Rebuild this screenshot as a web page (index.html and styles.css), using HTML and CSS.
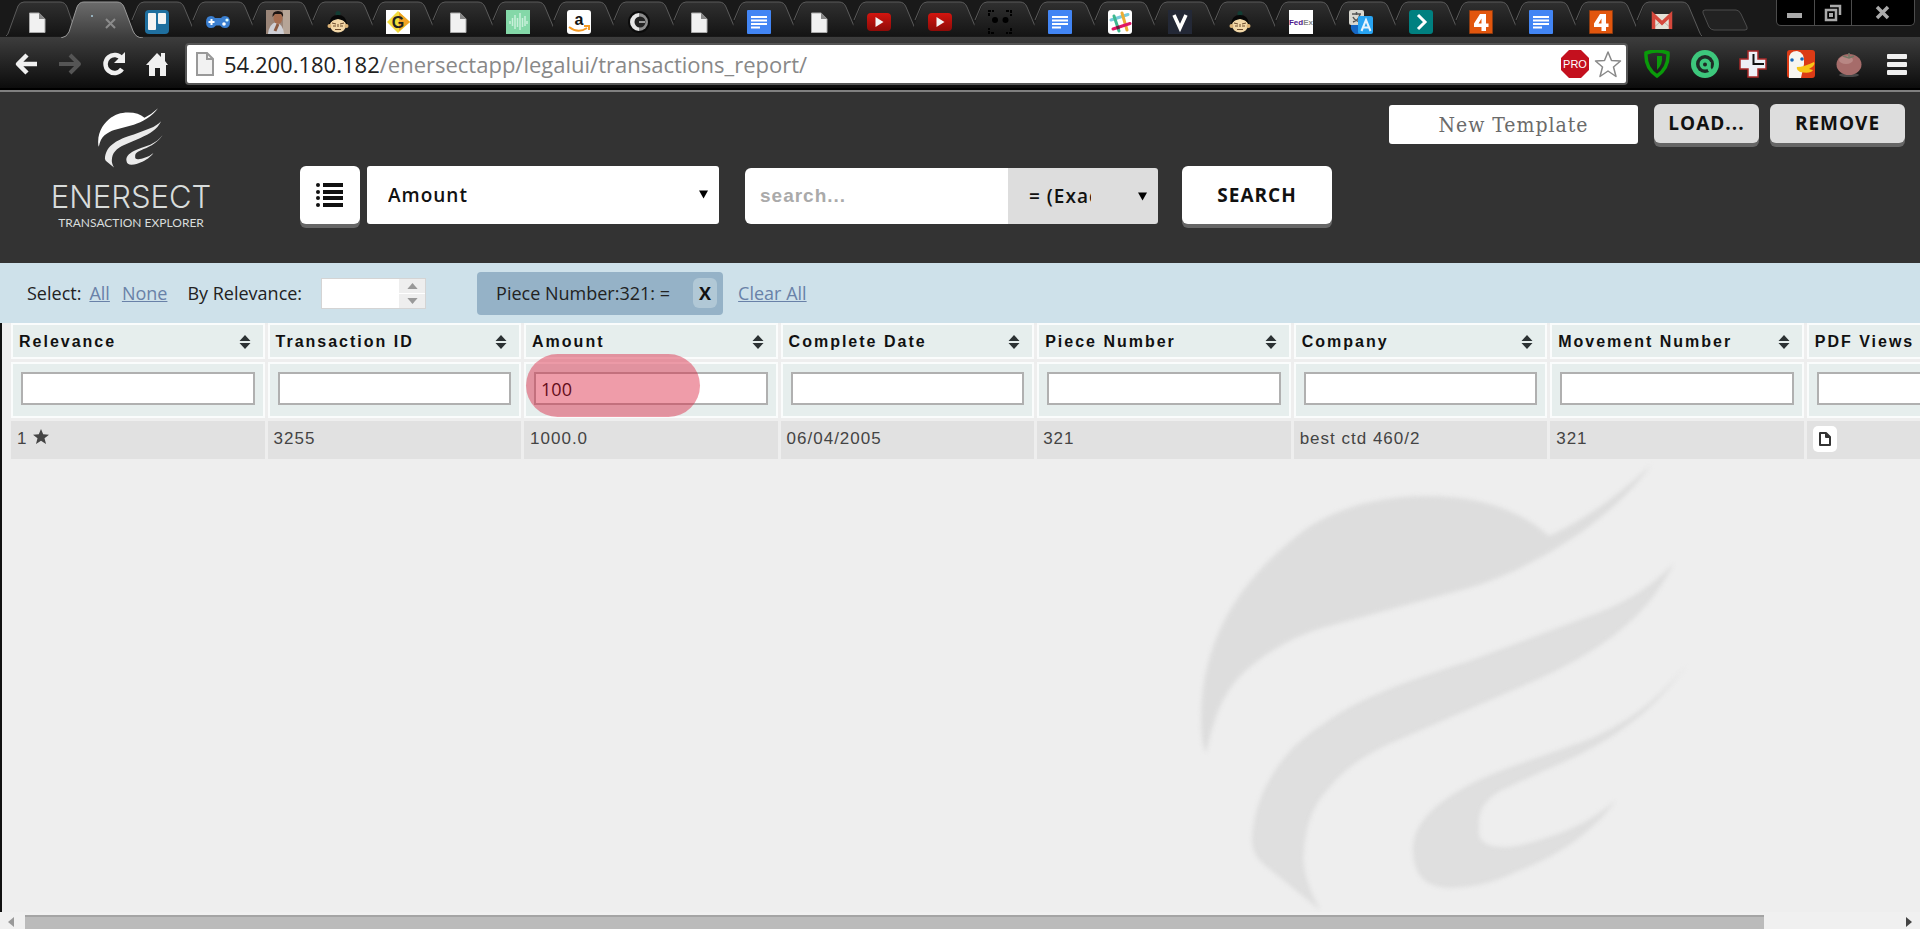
FILE: index.html
```html
<!DOCTYPE html>
<html lang="en">
<head>
<meta charset="utf-8">
<title>Enersect Transaction Explorer</title>
<link rel="stylesheet" href="styles.css">
</head>
<body>
<svg class="defs" aria-hidden="true">
  <defs>
    <linearGradient id="g-tab" x1="0" y1="0" x2="0" y2="1"><stop offset="0" stop-color="#303030"/><stop offset="1" stop-color="#141414"/></linearGradient>
    <linearGradient id="g-active" x1="0" y1="0" x2="0" y2="1"><stop offset="0" stop-color="#6c6c6c"/><stop offset="1" stop-color="#3c3c3c"/></linearGradient>
    <linearGradient id="g-yt" x1="0" y1="0" x2="0" y2="1"><stop offset="0" stop-color="#d3150f"/><stop offset="1" stop-color="#8e0b08"/></linearGradient>
  </defs>
  <symbol id="tab" viewBox="-18 0 84 38">
    <path fill="url(#g-tab)" d="M-12 36 0 6Q2 2 6 2H38Q43 2 45 7L56 31 59 36Z"/>
    <path fill="none" stroke="#5a5a5a" d="M-7 20-1 6Q1 2 5 2H38Q43 2 45 7L55 31Q57 36 58 36"/>
  </symbol>
  <symbol id="tab-first" viewBox="-18 0 84 38">
    <path fill="url(#g-tab)" stroke="#5a5a5a" d="M-13 36Q-11 35-10 31L-1 6Q1 2 5 2H41Q46 2 48 7L58 36"/>
  </symbol>
  <symbol id="tab-active" viewBox="-18 0 84 38">
    <path fill="url(#g-active)" stroke="#999" d="M-18 38Q-12 37-10 32L-2 7Q0 2 5 2H38Q43 2 45 7L54 31Q57 38 64 38"/>
  </symbol>
  <symbol id="i-doc" viewBox="0 0 24 24"><path fill="#f1f1f1" stroke="#aaa" d="M4.500 3H14l6 6v13.500H4.500Z"/><path fill="#888" d="M14 2.500V9h6.500Z"/></symbol>
  <symbol id="i-trello" viewBox="0 0 24 24"><rect width="24" height="24" rx="4" fill="#1f6f9f"/><rect x="3" y="3" width="8" height="17" rx="1" fill="#f4f4f4"/><rect x="13" y="3" width="8" height="11" rx="1" fill="#f4f4f4"/></symbol>
  <symbol id="i-pad" viewBox="0 0 24 24"><path fill="#3b7fd0" d="M5 6Q0 6 0 12T5 18Q8 18 10 15.500H14Q16 18 19 18 24 18 24 12T19 6Q16 6 15 8H9Q8 6 5 6Z"/><path stroke="#fff" stroke-width="2" d="M5.500 9v6M2.500 12h6"/><circle cx="18" cy="14" r="1.800" fill="#fff"/><circle cx="21" cy="10" r="1.600" fill="#dff"/></symbol>
  <symbol id="i-photo" viewBox="0 0 24 24"><path fill="#9a8578" d="M0 0h24v24H0z"/><path fill="#b6a597" d="M17 0h7v24h-7z"/><path fill="#cfd0d6" d="M2 24Q3 14 10 12q7 2 8 12Z"/><ellipse cx="12" cy="8" rx="4.500" ry="6" fill="#a56d50"/><path fill="#1c1412" d="M6.500 7Q6 1 12 1t5 6L15 4H9Z"/><path stroke="#8c5b42" stroke-width="3" d="M12 14l-3 7"/></symbol>
  <symbol id="i-guru" viewBox="0 0 24 24"><circle cx="12" cy="3.500" r="2.500" fill="#123c33"/><path fill="#080808" d="M3 14Q4 5 12 5t9 9Z"/><ellipse cx="12" cy="15.500" rx="8" ry="7" fill="#f3d8a8"/><path fill="#080808" d="M4 13Q5 7 12 7t8 6Q18 10 12 9 6 10 4 13Z"/><circle cx="3.500" cy="16" r="2" fill="#dcb377"/><circle cx="20.500" cy="16" r="2" fill="#dcb377"/><path fill="none" stroke="#6b4a2c" d="M6 13l4 1M18 13l-4 1M7 16h3M14 16h3M9 19.500h6M12 14v3"/></symbol>
  <symbol id="i-wave" viewBox="0 0 24 24"><path fill="#84d8a8" d="M0 0h24v24H0z"/><path stroke="#c8f0da" stroke-width="1.500" d="M4 11v3M6.500 8v8M9 5v14M11.500 8v9M14 3v17M16.500 8v9M19 6v10M21 11v3"/></symbol>
  <symbol id="i-c" viewBox="0 0 24 24"><circle cx="12" cy="12" r="11" fill="#0b0b0b"/><path fill="#e6e6e6" d="M12 3A9 9 0 0 0 12 21Z"/><path fill="#8d8d8d" d="M12 3A9 9 0 0 1 12 21Z"/><circle cx="13" cy="12" r="5.500" fill="#222"/><path stroke="#999" stroke-width="2" d="M12 12h6"/></symbol>
  <symbol id="i-gdoc" viewBox="0 0 24 24"><rect width="24" height="24" rx="1" fill="#4285f4"/><path stroke="#fff" stroke-width="2" d="M4 7h16M4 10.500h16M4 14h16M4 17.500h9"/></symbol>
  <symbol id="i-yt" viewBox="0 0 24 24"><rect y="3" width="24" height="18" rx="4" fill="url(#g-yt)"/><path fill="#f3f3f3" d="M8.500 7v10l8-5Z"/></symbol>
  <symbol id="i-face" viewBox="0 0 24 24"><path fill="none" stroke="#000" stroke-width="2" stroke-dasharray="3 1" d="M1 6V1h5M18 1h5v5M23 18v5h-5M6 23H1v-5"/><circle cx="7" cy="10" r="3" fill="#000"/><circle cx="17.500" cy="10" r="3" fill="#000"/></symbol>
  <symbol id="i-slack" viewBox="0 0 24 24"><rect width="24" height="24" rx="3" fill="#fff"/><g fill="none" stroke-width="3" stroke-linecap="round"><path stroke="#76cbdc" d="M3 10 20 4.500"/><path stroke="#ecae35" d="M14 3l5 17"/><path stroke="#3eb890" d="M6 6l5 15"/><path stroke="#e01765" d="M5 19l17-5.500"/></g><path stroke="#6b1a3a" stroke-width="3" d="M8.500 18l3-1"/></symbol>
  <symbol id="i-v" viewBox="0 0 24 24"><path fill="#232836" d="M0 0h24v24H0z"/><path fill="none" stroke="#fff" stroke-width="3.500" d="M6 5l6 13L18 5"/></symbol>
  <symbol id="i-translate" viewBox="0 0 24 24"><rect width="15" height="15" rx="2" fill="#d9d8d0"/><path fill="none" stroke="#555" stroke-width="1.500" d="M3 4h9M7.500 2v3M4 12q6-2 7-8M4 7q2 4 8 5"/><path fill="#1567c4" d="M2 15h8v9H6q-5-3-4-9Z"/><rect x="9" y="6" width="15" height="18" rx="2" fill="#28a4f2"/><path fill="none" stroke="#e6f3fc" stroke-width="2" d="M12.500 21 17 10l4.500 11M14 17.500h6"/></symbol>
  <symbol id="i-chev" viewBox="0 0 24 24"><rect width="24" height="24" rx="3" fill="#008080"/><path fill="none" stroke="#fff" stroke-width="3" d="M9 5l7 7-7 7"/></symbol>
  <symbol id="i-4" viewBox="0 0 24 24"><path fill="#e2560d" stroke="#8c3a10" d="M.5.5h23v23H.5z"/><path fill="#fff" fill-rule="evenodd" d="M11 4h6v9.500h2.500V17H17v4h-4.500v-4H5v-3.500ZM12.500 8.500 9.500 13.500h3Z"/></symbol>
  <symbol id="i-gmail" viewBox="0 0 24 24"><path fill="#e4e1d6" d="M2 4h20v15H2z"/><path stroke="#b9b5a8" d="M2 19l8-7M22 19l-8-7"/><path fill="none" stroke="#d5483c" stroke-width="3.500" d="M3.500 19V5L12 13l8.500-8v14"/></symbol>
  <symbol id="i-sort" viewBox="0 0 12 14"><path d="M6 0l5.500 6H.5ZM6 14 .5 8h11Z"/></symbol>
  <symbol id="swoosh" viewBox="1200 466 488 448">
    <path d="M1651 467Q1600 515 1549 538C1520 512 1480 498 1426 498C1370 498 1325 515 1298 537C1250 575 1202 630 1201 720Q1201 745 1206 755C1215 715 1225 690 1249 670C1275 648 1300 637 1322 630L1469 590C1530 572 1610 525 1651 467Z"/>
    <path class="swoosh-mid" d="M1674 565C1650 590 1625 605 1592 617L1469 663C1400 685 1355 702 1322 727C1280 752 1252 800 1252 845Q1254 860 1267 869L1320 912C1306 885 1302 868 1304 853C1306 828 1312 808 1329 790C1346 769 1368 755 1396 743L1518 690C1590 660 1645 625 1674 565Z"/>
    <path class="swoosh-low" d="M1686 667C1660 700 1630 723 1592 740C1540 760 1500 770 1469 787C1430 808 1408 830 1414 862Q1418 890 1451 890C1480 889 1500 882 1518 873C1560 858 1597 830 1616 802C1595 820 1575 830 1555 837C1530 845 1515 850 1500 849C1482 848 1478 840 1479 830C1478 812 1484 803 1500 793L1543 773C1600 750 1650 720 1686 667Z"/>
  </symbol>
</svg>

<header class="browser">
  <div class="strip">
    <nav class="tabs" aria-label="Open tabs">
      <button class="tab" aria-label="Page"><svg class="shape"><use href="#tab-first"/></svg><svg class="fav"><use href="#i-doc"/></svg></button>
      <button class="tab tab-current" aria-label="Current tab"><svg class="shape"><use href="#tab-active"/></svg><svg class="fav-close" viewBox="0 0 42 24"><circle cx="7" cy="6" r="1" fill="#acd"/><path stroke="#8b8b8b" stroke-width="2" d="M21 9l9 9M30 9l-9 9"/></svg></button>
      <button class="tab" aria-label="Trello"><svg class="shape"><use href="#tab"/></svg><svg class="fav"><use href="#i-trello"/></svg></button>
      <button class="tab" aria-label="Games"><svg class="shape"><use href="#tab"/></svg><svg class="fav"><use href="#i-pad"/></svg></button>
      <button class="tab" aria-label="Profile"><svg class="shape"><use href="#tab"/></svg><svg class="fav"><use href="#i-photo"/></svg></button>
      <button class="tab" aria-label="Guru"><svg class="shape"><use href="#tab"/></svg><svg class="fav"><use href="#i-guru"/></svg></button>
      <button class="tab" aria-label="G"><svg class="shape"><use href="#tab"/></svg><svg class="fav" viewBox="0 0 24 24"><path fill="#fff" d="M0 0h24v24H0z"/><path fill="#f2dc3c" d="M12 1 24 12 12 23 1 12Z"/><path fill="#f2a224" d="M13 2l11 10-11 9Z"/><text x="12" y="18" text-anchor="middle" class="glyph glyph-g">G</text></svg></button>
      <button class="tab" aria-label="Page"><svg class="shape"><use href="#tab"/></svg><svg class="fav"><use href="#i-doc"/></svg></button>
      <button class="tab" aria-label="Audio"><svg class="shape"><use href="#tab"/></svg><svg class="fav"><use href="#i-wave"/></svg></button>
      <button class="tab" aria-label="Amazon"><svg class="shape"><use href="#tab"/></svg><svg class="fav" viewBox="0 0 24 24"><rect width="24" height="24" rx="3" fill="#fff"/><text x="12" y="15" text-anchor="middle" class="glyph glyph-a">a</text><path fill="none" stroke="#f59a23" stroke-width="2" d="M2 17q9 7 18 1M17 16h5v4"/></svg></button>
      <button class="tab" aria-label="C"><svg class="shape"><use href="#tab"/></svg><svg class="fav"><use href="#i-c"/></svg></button>
      <button class="tab" aria-label="Page"><svg class="shape"><use href="#tab"/></svg><svg class="fav"><use href="#i-doc"/></svg></button>
      <button class="tab" aria-label="Docs"><svg class="shape"><use href="#tab"/></svg><svg class="fav"><use href="#i-gdoc"/></svg></button>
      <button class="tab" aria-label="Page"><svg class="shape"><use href="#tab"/></svg><svg class="fav"><use href="#i-doc"/></svg></button>
      <button class="tab" aria-label="Video"><svg class="shape"><use href="#tab"/></svg><svg class="fav"><use href="#i-yt"/></svg></button>
      <button class="tab" aria-label="Video"><svg class="shape"><use href="#tab"/></svg><svg class="fav"><use href="#i-yt"/></svg></button>
      <button class="tab" aria-label="Face"><svg class="shape"><use href="#tab"/></svg><svg class="fav"><use href="#i-face"/></svg></button>
      <button class="tab" aria-label="Docs"><svg class="shape"><use href="#tab"/></svg><svg class="fav"><use href="#i-gdoc"/></svg></button>
      <button class="tab" aria-label="Slack"><svg class="shape"><use href="#tab"/></svg><svg class="fav"><use href="#i-slack"/></svg></button>
      <button class="tab" aria-label="V"><svg class="shape"><use href="#tab"/></svg><svg class="fav"><use href="#i-v"/></svg></button>
      <button class="tab" aria-label="Guru"><svg class="shape"><use href="#tab"/></svg><svg class="fav"><use href="#i-guru"/></svg></button>
      <button class="tab" aria-label="FedEx"><svg class="shape"><use href="#tab"/></svg><svg class="fav" viewBox="0 0 24 24"><path fill="#fff" d="M0 0h24v24H0z"/><text x="12" y="15" text-anchor="middle" class="glyph glyph-f">Fed<tspan class="glyph-e">Ex</tspan></text></svg></button>
      <button class="tab" aria-label="Translate"><svg class="shape"><use href="#tab"/></svg><svg class="fav"><use href="#i-translate"/></svg></button>
      <button class="tab" aria-label="Console"><svg class="shape"><use href="#tab"/></svg><svg class="fav"><use href="#i-chev"/></svg></button>
      <button class="tab" aria-label="4"><svg class="shape"><use href="#tab"/></svg><svg class="fav"><use href="#i-4"/></svg></button>
      <button class="tab" aria-label="Docs"><svg class="shape"><use href="#tab"/></svg><svg class="fav"><use href="#i-gdoc"/></svg></button>
      <button class="tab" aria-label="4"><svg class="shape"><use href="#tab"/></svg><svg class="fav"><use href="#i-4"/></svg></button>
      <button class="tab" aria-label="Gmail"><svg class="shape"><use href="#tab"/></svg><svg class="fav"><use href="#i-gmail"/></svg></button>
    </nav>
    <button class="new-tab" aria-label="New tab"><svg viewBox="0 0 46 22" width="46" height="22"><path fill="#222" stroke="#4c4c4c" d="M3 1H34Q37 1 39 5L45 18Q46 21 43 21H12Q9 21 7 18L1 4Q0 1 3 1Z"/></svg></button>
    <div class="window-controls">
      <button aria-label="Minimize"><svg viewBox="0 0 16 16" width="16" height="16"><path fill="#aaa" d="M0 8h15v5H0z"/></svg></button>
      <button aria-label="Restore"><svg viewBox="0 0 18 18" width="18" height="18"><path fill="none" stroke="#aaa" stroke-width="2.500" d="M6 2h10v9M2 6h10v10H2Z"/><path fill="#aaa" d="M5 9h4v4H5z"/></svg></button>
      <button class="wide" aria-label="Close"><svg viewBox="0 0 16 16" width="16" height="16"><path stroke="#aaa" stroke-width="3.500" d="M2 2l11 11M13 2 2 13"/></svg></button>
    </div>
  </div>
  <div class="toolbar">
    <div class="nav-buttons">
      <button aria-label="Back"><svg viewBox="0 0 24 24"><path fill="none" stroke="#f0f0f0" stroke-width="4.500" stroke-linejoin="round" d="M13 3 4 12l9 9M3 12h20"/></svg></button>
      <button aria-label="Forward"><svg viewBox="0 0 24 24"><path fill="none" stroke="#555" stroke-width="4" stroke-linejoin="round" d="M12 3l9 9-9 9M22 12H1"/></svg></button>
      <button aria-label="Reload"><svg viewBox="0 0 24 24"><path fill="none" stroke="#f0f0f0" stroke-width="4.500" d="M20 7A9 9 0 1 0 20 17"/><path fill="#f0f0f0" d="M23 0v11H12Z"/></svg></button>
      <button aria-label="Home"><svg viewBox="0 0 24 24"><path fill="#f0f0f0" d="M11 1l4 4V1h4v8l3 4h-2v11h-6v-8H9v8H3V13H0Z"/></svg></button>
    </div>
    <div class="omnibox">
      <svg class="page-icon" viewBox="0 0 18 24"><path fill="#f2f2f2" stroke="#999" stroke-width="2" d="M1 1h10l6 6v16H1Z"/><path fill="none" stroke="#999" stroke-width="2" d="M11 1v6h6"/></svg>
      <div class="url"><span class="host">54.200.180.182</span>/enersectapp/legalui/transactions_report/</div>
      <svg class="pro" viewBox="0 0 28 28"><path fill="#c4101e" d="M8 0h12l8 8v12l-8 8H8l-8-8V8Z"/><text x="14" y="18" text-anchor="middle" class="glyph glyph-pro">PRO</text></svg>
      <button aria-label="Bookmark"><svg class="star" viewBox="0 0 28 28"><path fill="#fff" stroke="#888" stroke-width="1.500" stroke-linejoin="round" d="M14 2l3.500 8.500 9 .5-7 6 2.500 9.500-8-5.500-8 5.500L8.500 17l-7-6 9-.5Z"/></svg></button>
    </div>
    <div class="extensions">
      <button aria-label="Shield"><svg viewBox="0 0 28 28"><path fill="none" stroke="#0a9a0a" stroke-width="3.500" d="M3 3Q14-1 25 3 26 18 14 26 2 18 3 3Z"/><path fill="#0a9a0a" d="M14 6h5Q20 14 14 20Z"/></svg></button>
      <button aria-label="Antivirus"><svg viewBox="0 0 28 28"><circle cx="14" cy="14" r="14" fill="#3dc77c"/><circle cx="14" cy="14" r="9" fill="#1f2a25"/><circle cx="14" cy="14" r="5.500" fill="#3dc77c"/><path fill="none" stroke="#3dc77c" stroke-width="3.500" d="M18 12v6q1 4 5 4"/><circle cx="14" cy="14.500" r="2" fill="#1f2a25"/></svg></button>
      <button aria-label="Clock"><svg viewBox="0 0 28 28"><path fill="#edf0f6" stroke="#a82727" stroke-width="1.500" d="M9 1h10v8h8v10h-8v8H9v-8H1V9h8Z"/><path stroke="#111" stroke-width="2" d="M14.500 4v11M14 14h11"/></svg></button>
      <button aria-label="Duck"><svg viewBox="0 0 28 28"><rect width="28" height="28" rx="3" fill="#dc3b16"/><path fill="#f7f5f0" d="M2 28V9Q2 1 10 1 18 2 17 14L14 28Z"/><circle cx="5" cy="10" r="1.800" fill="#1667b8"/><circle cx="15" cy="9" r="1.800" fill="#1667b8"/><path fill="#f8c516" d="M10 17q7 0 17-5 2 3-5 7l4 1q-2 4-13 2-4-2-3-5Z"/></svg></button>
      <button aria-label="Tomato"><svg viewBox="0 0 28 28"><ellipse cx="14" cy="25" rx="10" ry="2" fill="#494949"/><ellipse cx="14" cy="14.500" rx="12.500" ry="10.500" fill="#a66c6a"/><ellipse cx="11" cy="10" rx="7" ry="4" fill="#b88784"/><path fill="none" stroke="#737765" stroke-width="1.500" d="M8 6l6 2 5-2M14 3v4"/></svg></button>
      <button aria-label="Menu"><svg viewBox="0 0 28 28"><g fill="#f0f0f0"><rect x="4" y="4" width="20" height="5" rx="1"/><rect x="4" y="12" width="20" height="5" rx="1"/><rect x="4" y="20" width="20" height="5" rx="1"/></g></svg></button>
    </div>
  </div>
</header>

<main class="app">
  <header class="app-header">
    <a class="brand" href="#" aria-label="Enersect Transaction Explorer">
      <svg class="brand-mark"><use href="#swoosh"/></svg>
      <span class="brand-name">ENERSECT</span>
      <span class="brand-sub">TRANSACTION EXPLORER</span>
    </a>
    <form class="search-form">
      <button type="button" class="btn btn-list" aria-label="Columns"><svg viewBox="0 0 28 26" width="28" height="26"><g fill="#111"><circle cx="2" cy="3" r="2"/><circle cx="2" cy="10" r="2"/><circle cx="2" cy="16" r="2"/><circle cx="2" cy="23" r="2"/><path d="M7 1h20v4H7zM7 8h20v4H7zM7 14h20v4H7zM7 21h20v4H7z"/></g></svg></button>
      <span class="select select-field"><select aria-label="Field"><option>Amount</option><option>Piece Number</option><option>Company</option></select><svg class="caret" viewBox="0 0 10 9"><path d="M0 0h10L5 9Z"/></svg></span>
      <input class="search-text" type="text" placeholder="search..." aria-label="Search">
      <span class="select select-op"><select aria-label="Operator"><option>= (Exact)</option></select><svg class="caret" viewBox="0 0 10 9"><path d="M0 0h10L5 9Z"/></svg></span>
      <button type="button" class="btn btn-search">SEARCH</button>
    </form>
    <div class="templates">
      <input class="template-name" type="text" placeholder="New Template" aria-label="Template name">
      <button class="btn btn-grey btn-load">LOAD...</button>
      <button class="btn btn-grey btn-remove">REMOVE</button>
    </div>
  </header>

  <section class="filters">
    <span>Select:</span>
    <a href="#">All</a>
    <a href="#" class="none">None</a>
    <label for="relevance">By Relevance:</label>
    <span class="spinner"><input id="relevance" type="text" inputmode="numeric"><span class="steps"><button aria-label="Increase"><svg viewBox="0 0 12 7"><path d="M6 0l6 7H0Z"/></svg></button><button aria-label="Decrease"><svg viewBox="0 0 12 7"><path d="M6 7 0 0h12Z"/></svg></button></span></span>
    <span class="chip">Piece Number:321: =<button aria-label="Remove filter">X</button></span>
    <a href="#">Clear All</a>
  </section>

  <section class="results">
    <svg class="watermark" aria-hidden="true"><use href="#swoosh"/></svg>
    <table>
      <thead>
        <tr class="titles">
          <th><span>Relevance<svg><use href="#i-sort"/></svg></span></th>
          <th><span>Transaction ID<svg><use href="#i-sort"/></svg></span></th>
          <th><span>Amount<svg><use href="#i-sort"/></svg></span></th>
          <th><span>Complete Date<svg><use href="#i-sort"/></svg></span></th>
          <th><span>Piece Number<svg><use href="#i-sort"/></svg></span></th>
          <th><span>Company<svg><use href="#i-sort"/></svg></span></th>
          <th><span>Movement Number<svg><use href="#i-sort"/></svg></span></th>
          <th><span>PDF Views<svg><use href="#i-sort"/></svg></span></th>
        </tr>
        <tr class="inputs">
          <td><input type="text" aria-label="Filter Relevance"></td>
          <td><input type="text" aria-label="Filter Transaction ID"></td>
          <td class="marked"><input type="text" value="100" aria-label="Filter Amount"><span class="marker"></span></td>
          <td><input type="text" aria-label="Filter Complete Date"></td>
          <td><input type="text" aria-label="Filter Piece Number"></td>
          <td><input type="text" aria-label="Filter Company"></td>
          <td><input type="text" aria-label="Filter Movement Number"></td>
          <td><input type="text" aria-label="Filter PDF Views"></td>
        </tr>
      </thead>
      <tbody>
        <tr>
          <td>1 <svg class="rank" viewBox="0 0 16 15"><path d="M8 0l2.200 5.300 5.800.4-4.500 3.600L13 15 8 11.800 3 15l1.500-5.700L0 5.700l5.800-.4Z"/></svg></td>
          <td>3255</td>
          <td>1000.0</td>
          <td>06/04/2005</td>
          <td>321</td>
          <td>best ctd 460/2</td>
          <td>321</td>
          <td class="pdf"><button aria-label="Open PDF"><svg viewBox="0 0 12 14" width="12" height="14"><path fill="none" stroke="#333" stroke-width="2" stroke-linejoin="round" d="M1 1h6l4 4v8H1ZM7 1v4h4"/></svg></button></td>
        </tr>
      </tbody>
    </table>
  </section>

  <div class="scrollbar" aria-hidden="true">
    <svg class="left" viewBox="0 0 6 10"><path d="M6 0v10L0 5Z"/></svg>
    <div class="track"><div class="thumb"></div></div>
    <svg class="right" viewBox="0 0 6 10"><path d="M0 0v10l6-5Z"/></svg>
  </div>
</main>
</body>
</html>
```
FILE: styles.css
```css
* { box-sizing: border-box; }

body {
  margin: 0;
  height: 100vh;
  display: flex;
  flex-direction: column;
  overflow: hidden;
  background: #eee;
  font-family: "Open Sans", "Noto Sans", sans-serif;
  font-size: 18px;
  color: #222;
}

button {
  margin: 0;
  padding: 0;
  border: 0;
  background: none;
  color: inherit;
  font: inherit;
}

svg { display: block; }
.defs { position: absolute; width: 0; height: 0; }

.glyph { font-family: "Liberation Sans", sans-serif; font-weight: bold; }
.glyph-g { font-size: 16px; fill: #222; }
.glyph-a { font-size: 16px; fill: #111; }
.glyph-f { font-size: 8px; fill: #4d148c; }
.glyph-e { fill: #888; }
.glyph-pro { font-size: 11px; font-weight: normal; fill: #fff; }

/* Browser frame */
.browser { border-bottom: 2px solid #808080; }
.strip {
  display: flex;
  height: 37px;
  padding-left: 19px;
  background: #191919;
}
.tabs { flex: 1; display: flex; }
.tab { position: relative; flex: 1; padding: 7px 0 0 6px; }
.tab-current { z-index: 1; }
.shape {
  position: absolute;
  top: 0;
  left: -18px;
  width: 84px;
  height: 38px;
}
.fav, .fav-close { position: relative; width: 24px; height: 24px; }
.fav-close { width: 42px; }
.new-tab { align-self: flex-start; margin: 9px 28px 0 -2px; }
.window-controls {
  display: flex;
  height: 26px;
  width: 139px;
  margin-right: 5px;
  border: 1px solid #4c4c4c;
  border-top: 0;
  border-radius: 0 0 5px 5px;
  background: #000;
}
.window-controls button {
  flex: 37;
  display: flex;
  align-items: center;
  justify-content: center;
  border-right: 1px solid #4c4c4c;
}
.window-controls .wide { flex: 62; border: 0; }

.toolbar {
  display: flex;
  align-items: center;
  padding: 6px 0 3px 14px;
  border-bottom: 2px solid #000;
  background: linear-gradient(#3d3d3d, #0c0c0c);
}
.nav-buttons { display: flex; gap: 20px; margin-right: 15px; }
.nav-buttons svg { width: 24px; height: 24px; }
.omnibox {
  flex: 1;
  display: flex;
  align-items: center;
  height: 42px;
  padding: 0 4px 0 9px;
  border: 2px solid #555;
  border-radius: 4px;
  background: #fff;
}
.page-icon { width: 18px; height: 24px; margin-right: 10px; }
.url { flex: 1; font-size: 22px; line-height: 36px; color: #888; }
.host { color: #222; }
.pro, .star { width: 28px; height: 28px; }
.pro { margin-right: 5px; }
.extensions { display: flex; gap: 20px; padding: 0 9px 0 15px; }
.extensions svg { width: 28px; height: 28px; }

/* Application */
.app { flex: 1; display: flex; flex-direction: column; min-height: 0; }
.app-header {
  display: flex;
  align-items: flex-start;
  height: 171px;
  background: #333;
}
.brand {
  display: flex;
  flex-direction: column;
  align-items: center;
  width: 180px;
  margin: 16px 0 0 41px;
  color: #d8dcdb;
  text-decoration: none;
}
.brand-mark { width: 65px; height: 60px; margin-right: 2px; fill: #fff; }
.brand-mark + .brand-name { margin-top: 13px; }
.swoosh-mid, .swoosh-low { opacity: .9; }
.brand-name {
  font: 300 31px/32px "Inter", "Lato", sans-serif;
}
.brand-sub {
  font: 12px/20px "Lato", sans-serif;
}

.search-form {
  display: flex;
  align-items: flex-end;
  height: 58px;
  margin: 74px 0 0 79px;
}
.btn {
  border-radius: 6px;
  background: #fff;
  box-shadow: 0 4px 0 #666;
  color: #111;
  font-size: 19px;
  font-weight: 700;
  letter-spacing: 1px;
}
.btn-list {
  display: flex;
  align-items: center;
  justify-content: center;
  width: 60px;
  height: 58px;
}
.select { position: relative; }
.select select {
  width: 100%;
  height: 100%;
  border: 0;
  border-radius: 3px;
  appearance: none;
  background: #fff;
  color: #111;
  font-family: inherit;
  font-size: 19px;
  font-weight: 600;
  letter-spacing: 1px;
}
.caret {
  position: absolute;
  top: 24px;
  right: 11px;
  width: 9px;
  height: 9px;
  pointer-events: none;
}
.select-field { width: 352px; height: 58px; margin: 0 26px 0 7px; }
.select-field select { padding: 0 30px 0 21px; }
.search-text {
  width: 263px;
  height: 56px;
  padding: 0 15px;
  border: 0;
  border-radius: 6px 0 0 6px;
  background: #fff;
  font: bold 19px "Liberation Sans", sans-serif;
  letter-spacing: 1px;
}
.search-text::placeholder { color: #aaa; }
.select-op { width: 150px; height: 56px; }
.select-op select {
  padding: 0 67px 0 21px;
  border-radius: 0 3px 3px 0;
  background: #ddd;
}
.btn-search { width: 150px; height: 58px; margin-left: 24px; }

.templates { display: flex; align-items: center; margin: 10px 15px 0 auto; }
.template-name {
  width: 249px;
  height: 39px;
  margin: 3px 16px 0 0;
  border: 0;
  border-radius: 3px;
  background: #fff;
  font: 21px "DejaVu Serif Condensed", "DejaVu Serif", serif;
  letter-spacing: 1px;
  text-align: center;
}
.template-name::placeholder { color: #6a6a6a; }
.btn-grey { height: 39px; background: #ddd; }
.btn-load { width: 105px; margin-right: 11px; }
.btn-remove { width: 135px; }

.filters {
  display: flex;
  align-items: center;
  height: 60px;
  padding-left: 27px;
  background: #cee1ea;
}
.filters a { margin-left: 8px; color: #6981a8; }
.filters .none { margin: 0 20px 0 12px; }
.spinner {
  display: flex;
  width: 105px;
  height: 31px;
  margin-left: 19px;
  border: 1px solid #d4d4d4;
  background: #fff;
}
.spinner input { flex: 1; min-width: 0; border: 0; font: inherit; }
.steps { display: flex; flex-direction: column; gap: 1px; }
.steps button {
  flex: 1;
  display: flex;
  align-items: center;
  justify-content: center;
  width: 26px;
  background: #eee;
}
.steps svg { width: 11px; height: 6px; fill: #999; }
.chip {
  display: flex;
  align-items: center;
  justify-content: space-between;
  width: 246px;
  height: 43px;
  margin: 0 7px 0 51px;
  padding: 0 6px 0 19px;
  border-radius: 4px;
  background: #95b2c7;
}
.chip button {
  width: 24px;
  height: 30px;
  border-radius: 6px;
  background: #b1c8d6;
  font-weight: bold;
  color: #111;
}

.results {
  position: relative;
  flex: 1;
  min-height: 0;
  overflow: hidden;
  border-left: 2px solid #111;
}
.watermark {
  position: absolute;
  right: 232px;
  bottom: 0;
  width: 488px;
  height: 448px;
  fill: #ddd;
  filter: blur(2px);
}
table {
  position: relative;
  width: calc(107% + 3px);
  margin: -3px 0 0 6px;
  border-spacing: 3px;
  table-layout: fixed;
  font-family: "Liberation Sans", sans-serif;
}
thead { background: #e6eeed; }
thead th, thead td { border: 2px solid #fafcfc; background: #e6eeed; }
th {
  height: 36px;
  padding: 1px 12px 0 6px;
  text-align: left;
  font-size: 16px;
  letter-spacing: 2px;
  color: #111;
}
th span { display: flex; align-items: center; justify-content: space-between; }
th svg { width: 12px; height: 14px; fill: #2c3234; }
.inputs td { height: 56px; padding: 0 8px 3px; }
.inputs input {
  display: block;
  width: 100%;
  height: 33px;
  padding: 0 5px;
  border: 2px solid #b0b0b0;
  background: #fff;
  font: 18px "Open Sans", sans-serif;
}
.marked { position: relative; }
.marker {
  position: absolute;
  top: -10px;
  left: 0;
  width: 174px;
  height: 63px;
  border-radius: 32px;
  background: rgba(218, 30, 60, .44);
}
tbody td {
  height: 38px;
  padding: 0 6px 2px;
  background: #e1e1e1;
  font-size: 17px;
  letter-spacing: 1px;
  color: #444;
}
.rank { display: inline-block; width: 16px; height: 15px; fill: #444; }
.pdf button {
  display: flex;
  align-items: center;
  justify-content: center;
  width: 24px;
  height: 26px;
  border-radius: 5px;
  background: #fff;
}

.scrollbar {
  display: flex;
  align-items: center;
  height: 17px;
  padding: 3px 8px 0;
  background: #f0f0f0;
}
.scrollbar svg { width: 6px; height: 10px; fill: #999; }
.scrollbar .right { fill: #444; }
.track { flex: 1; align-self: stretch; margin: 0 11px; }
.thumb { width: 93%; height: 100%; border-top: 2px solid #a4a4a4; background: #bbb; }
```
